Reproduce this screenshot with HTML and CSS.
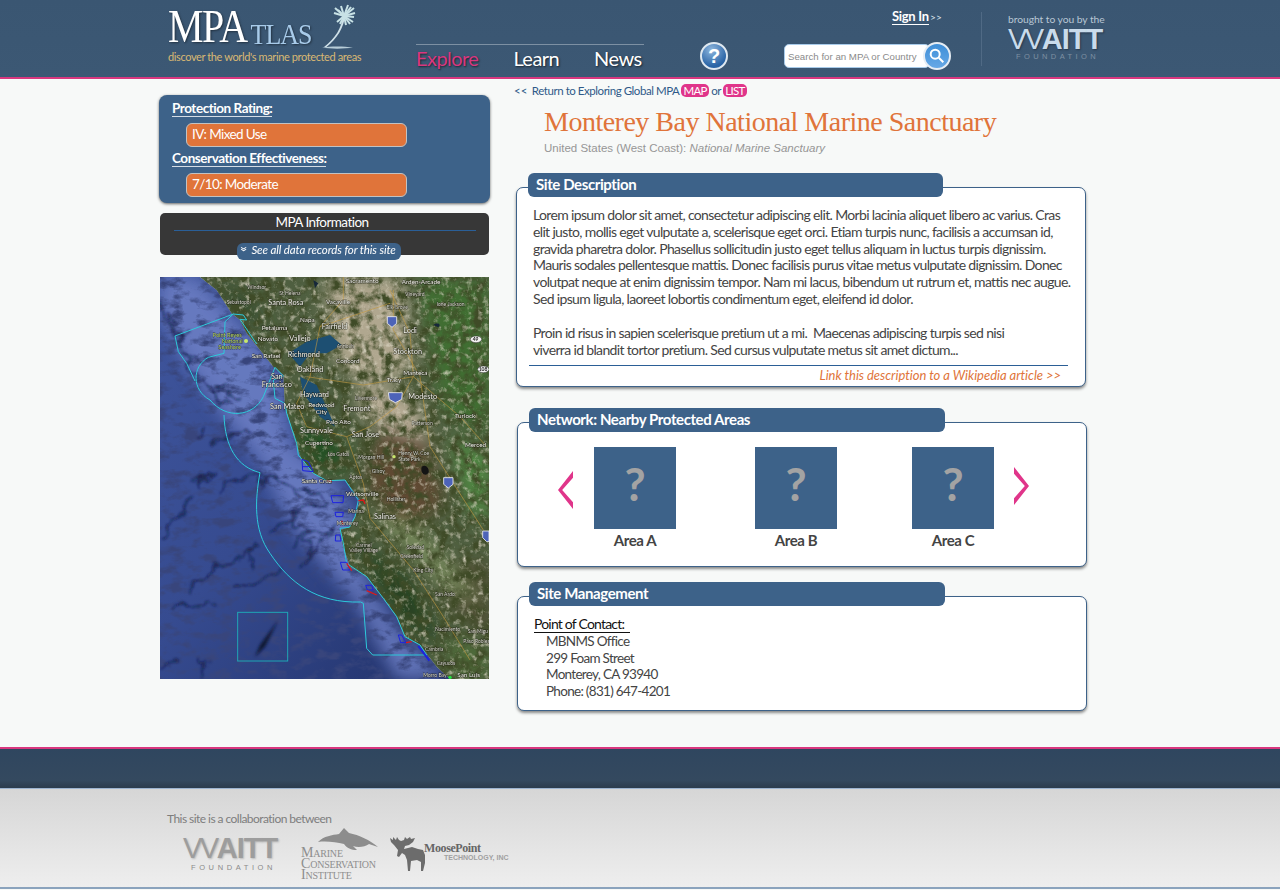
FILE: index.html
```html
<!DOCTYPE html>
<html lang="en">
<head>
<meta charset="utf-8">
<title>MPAtlas - Monterey Bay National Marine Sanctuary</title>
<link rel="stylesheet" href="styles.css">
</head>
<body>
<header class="site-header">
  <div class="logo">
    <div class="logo-word"><span class="logo-mpa">MPA</span><span class="logo-tlas">TLAS</span>
      <svg class="palm" viewBox="0 0 40 46" aria-hidden="true">
        <path class="palm-trunk" d="M23 13C22 24 15 36 4 44L6.500 44C17 36 24 24 25 13Z"/>
        <path class="palm-sand" d="M2 44.500C10 43 24 43 33 44.500C24 46 10 46 2 44.500Z"/>
        <g class="palm-fronds">
          <path d="M24 13L14 10"/><path d="M24 13L15 5"/><path d="M24 13L21 3"/><path d="M24 13L28 2"/>
          <path d="M24 13L34 5"/><path d="M24 13L35 10"/><path d="M24 13L33 19"/><path d="M24 13L26 22"/><path d="M24 13L17 19"/><path d="M24 13L31 4"/><path d="M24 13L18 7"/><path d="M24 13L34 14"/><path d="M24 13L30 21"/><path d="M24 13L20 21"/>
        </g>
      </svg>
    </div>
    <div class="tagline">discover the world's marine protected areas</div>
  </div>
  <nav class="main-nav">
    <a class="nav-item nav-active">Explore</a>
    <a class="nav-item nav-learn">Learn</a>
    <a class="nav-item nav-news">News</a>
  </nav>
  <div class="help-badge">?</div>
  <div class="account">
    <div class="signin"><a class="signin-link">Sign In</a> <span class="signin-arrows">&gt;&gt;</span></div>
    <div class="search">
      <span class="search-input">Search for an MPA or Country</span>
      <span class="search-btn">
        <svg viewBox="0 0 20 20" class="search-icon" aria-hidden="true"><circle cx="8" cy="8" r="5"/><path d="M12 12L17 17"/></svg>
      </span>
    </div>
  </div>
  <div class="brand">
    <div class="brand-by">brought to you by the</div>
    <div class="waitt"><span class="waitt-vv">VV</span>AITT</div>
    <div class="waitt-sub">FOUNDATION</div>
  </div>
</header>

<main class="page">
  <aside class="side">
    <section class="rating-card">
      <h3 class="rating-title">Protection Rating:</h3>
      <div class="rating-pill">IV: Mixed Use</div>
      <h3 class="rating-title rating-title-2">Conservation Effectiveness:</h3>
      <div class="rating-pill">7/10: Moderate</div>
    </section>
    <section class="info-card">
      <div class="info-title">MPA Information</div>
      <div class="info-rule"></div>
      <a class="info-pill"><span class="info-chev">&#187;</span> See all data records for this site</a>
    </section>
    <svg class="map" viewBox="30 21 987 1206" aria-label="Map of Monterey Bay National Marine Sanctuary">
      <defs>
        <linearGradient id="sea" x1="0" y1="0" x2="1" y2="1">
          <stop offset="0" stop-color="#3f559c"/><stop offset=".45" stop-color="#364b90"/><stop offset="1" stop-color="#1f2f66"/>
        </linearGradient>
        <filter id="wiggle" x="-10%" y="-10%" width="120%" height="120%">
          <feTurbulence type="fractalNoise" baseFrequency=".018" numOctaves="4" seed="5" result="n"/>
          <feDisplacementMap in="SourceGraphic" in2="n" scale="70" xChannelSelector="R" yChannelSelector="G"/>
          <feGaussianBlur stdDeviation="3.500"/>
        </filter>
        <filter id="b4" x="-30%" y="-30%" width="160%" height="160%"><feGaussianBlur stdDeviation="4"/></filter>
        <filter id="b30" x="-30%" y="-30%" width="160%" height="160%"><feGaussianBlur stdDeviation="26"/></filter>
        <filter id="noiseLand" x="0" y="0" width="100%" height="100%">
          <feTurbulence type="fractalNoise" baseFrequency=".03" numOctaves="5" seed="7"/>
          <feColorMatrix values="0 0 0 0 .05  0 0 0 0 .07  0 0 0 0 .02  2.200 2.200 0 0 -1.900"/>
        </filter>
        <filter id="noiseLight" x="0" y="0" width="100%" height="100%">
          <feTurbulence type="fractalNoise" baseFrequency=".06" numOctaves="4" seed="23"/>
          <feColorMatrix values="0 0 0 0 .72  0 0 0 0 .68  0 0 0 0 .56  1.400 1.400 0 0 -1.450"/>
        </filter>
        <filter id="noiseSea" x="0" y="0" width="100%" height="100%">
          <feTurbulence type="fractalNoise" baseFrequency=".02 .035" numOctaves="5" seed="11"/>
          <feColorMatrix values="0 0 0 0 .04  0 0 0 0 .06  0 0 0 0 .2  2.400 2.400 0 0 -2.300"/>
        </filter>
        <clipPath id="landClip">
          <path d="M150 21L200 60L245 130L270 150L290 190L330 240L370 290L400 315L405 410L435 510L455 570L490 610L530 632L585 630L630 690L620 730L600 770L570 780L580 830L600 890L650 920L700 985L740 1040L765 1100L810 1125L860 1190L900 1227L1017 1227L1017 21Z"/>
        </clipPath>
        <clipPath id="seaClip">
          <path d="M30 21L150 21L200 60L245 130L270 150L290 190L330 240L370 290L400 315L405 410L435 510L455 570L490 610L530 632L585 630L630 690L620 730L600 770L570 780L580 830L600 890L650 920L700 985L740 1040L765 1100L810 1125L860 1190L900 1227L30 1227Z"/>
        </clipPath>
      </defs>
      <g clip-path="url(#seaClip)">
        <rect x="30" y="21" width="987" height="1206" fill="url(#sea)"/>
        <path d="M140 21L380 290L420 520L560 640L640 800L640 920L760 1100L900 1227L740 1227L620 1000L420 760L340 590L120 300L30 120L30 21Z" fill="#6e80c6" filter="url(#b30)" opacity=".85"/>
        <rect x="30" y="21" width="987" height="1206" filter="url(#noiseSea)"/>
        <g class="canyon" filter="url(#wiggle)">
          <path d="M30 110L70 170L100 240L135 330"/>
          <path d="M60 130L90 150M70 190L110 200M100 260L140 270"/>
          <path d="M150 330L190 380L250 410M190 350L230 350M230 380L270 380"/>
          <path d="M130 495L165 480"/>
          <path d="M180 535L240 500L300 470"/>
          <path d="M140 640L175 610L155 655"/>
          <path d="M210 660L330 610L425 645L520 680M330 610L340 660M425 645L440 690"/>
          <path d="M360 790L430 730L520 690M430 730L450 770"/>
          <path d="M200 900L320 840L300 880"/>
          <path d="M420 830L540 770"/>
          <path d="M470 900L480 790"/>
          <path d="M30 1190L90 1170"/>
          <path d="M160 1170L150 1227"/>
          <path d="M30 800L120 700"/>
          <path d="M250 960L400 900"/>
          <path d="M560 760L450 900"/>
          <path d="M110 950L220 880M60 1010L180 1000"/>
        </g>
        <path class="seamount" d="M385 1050L330 1125L315 1160L345 1130Z" filter="url(#b4)"/>
      </g>
      <g clip-path="url(#landClip)">
        <rect x="30" y="21" width="987" height="1206" fill="#4f5f40"/>
        <g filter="url(#b30)">
          <path d="M530 21L760 21L790 300L700 340L570 300L530 160Z" fill="#b0a78f"/>
          <path d="M620 330L800 390L860 600L780 500L640 450Z" fill="#b7ac95"/>
          <path d="M690 470L830 510L880 700L760 800L650 640Z" fill="#5f4a30"/>
          <path d="M800 30L1017 30L1017 500L880 420Z" fill="#3f6e33"/>
          <path d="M900 500L1017 560L1017 760L960 720Z" fill="#4f8a42"/>
          <path d="M820 880L1017 880L1017 1100L900 1000Z" fill="#4f4c30"/>
          <path d="M170 21L300 80L360 200L270 130Z" fill="#33492b"/>
          <path d="M420 450L560 500L600 610L480 590Z" fill="#234f22"/>
          <path d="M600 800L780 930L880 1130L760 1060Z" fill="#23401f"/>
          <path d="M660 730L800 760L1000 1000L880 950Z" fill="#76885b"/>
          <path d="M880 1100L1017 1130L1017 1227L920 1227Z" fill="#4d6a38"/>
        </g>
        <rect x="30" y="21" width="987" height="1206" filter="url(#noiseLand)"/>
        <rect x="30" y="21" width="987" height="1206" filter="url(#noiseLight)"/>
        <path class="mtn" d="M815 590C830 580 840 600 835 610C825 620 810 610 815 590Z"/>
        <path class="bay" d="M415 250L470 215L540 195L575 225L530 250L480 250L450 290ZM450 320L500 345L555 470L510 440L460 370Z"/>
        <path class="lake" d="M850 165C865 155 875 165 865 172ZM490 30L505 40L495 55Z"/>
        <g class="road">
          <path d="M580 21L580 90L510 170L480 320L440 400L470 470L590 500L660 470L740 410L790 320L780 190L720 60"/>
          <path d="M730 60L730 180L810 320L840 530L910 640L1000 780"/>
          <path d="M470 320L640 345L790 320"/>
          <path d="M660 745L790 900L880 1040L960 1170"/>
          <path d="M590 500L640 640L660 745"/>
          <path d="M510 170L720 100"/>
          <path d="M790 320L930 440L1010 530"/>
        </g>
      </g>
      <g class="bound">
        <path d="M75 198L250 132L280 135L290 150L270 148L320 222"/>
        <path d="M75 198L85 245L110 280L135 333"/>
        <path d="M250 132L225 155L222 250L175 262C125 290 125 360 180 390C230 450 310 440 340 380L375 292L400 318L370 330L375 385L405 400L410 430L440 520L445 555L490 610L530 632L585 630L625 690L615 740L598 772L570 775L580 820L590 880L650 920L700 985L740 1040L765 1100L810 1125L830 1155L668 1155L650 1135L640 1000L632 996C500 1000 420 940 360 850C310 780 315 690 330 608C260 590 225 530 222 435"/>
        <rect x="263" y="1027" width="150" height="146"/>
      </g>
      <g class="mpa-blue">
        <path d="M456 568L475 575L490 605L458 602Z"/><path d="M456 590L480 590"/>
        <path d="M543 677L581 677L579 698L548 698Z"/>
        <path d="M555 727L580 727L578 740L558 740Z"/>
        <path d="M557 795L570 795L573 813L556 813Z"/>
        <path d="M571 877L590 877L600 900L578 900Z"/>
        <path d="M647 946L665 946L670 960L652 960Z"/>
        <path d="M745 1095L755 1095L768 1118L752 1118Z"/>
        <path class="mpa-solid" d="M805 1128L838 1172"/>
      </g>
      <g class="mpa-red">
        <path d="M625 692L640 690L645 702"/>
        <path d="M530 632L545 635"/>
        <path d="M575 752L580 765"/>
        <path d="M650 962L680 975"/>
        <path d="M768 1118L785 1115"/>
        <path d="M590 880L605 902"/>
      </g>
      <circle class="map-park" cx="288" cy="213" r="6"/>
      <circle class="map-park" cx="732" cy="560" r="5"/>
      <circle class="map-green" cx="900" cy="1222" r="5"/>
      <g class="lbl">
        <text x="587" y="40" class="sm">Sacramento</text><text x="755" y="43" class="sm">Arden-Arcade</text>
        <text x="292" y="58" class="xs">Windsor</text><text x="388" y="75" class="xs">St Helena</text>
        <text x="230" y="101" class="xs">Sebastopol</text><text x="355" y="105">Santa Rosa</text>
        <text x="528" y="103" class="sm">Vacaville</text><text x="765" y="78" class="xs">Vineyard</text>
        <text x="450" y="155" class="sm">Napa</text><text x="335" y="180" class="sm">Petaluma</text>
        <text x="515" y="178">Fairfield</text><text x="710" y="116" class="xs">Elk Grove</text>
        <text x="760" y="188">Lodi</text><text x="860" y="108" class="xs">Ione Jackson</text>
        <text x="323" y="213" class="sm">Novato</text><text x="418" y="214">Vallejo</text>
        <text x="305" y="263" class="sm">San Rafael</text><text x="413" y="260">Richmond</text>
        <text x="560" y="235" class="xs">Antioch</text><text x="558" y="280" class="sm">Concord</text>
        <text x="730" y="251">Stockton</text><text x="440" y="307">Oakland</text>
        <text x="363" y="327">San</text><text x="335" y="350">Francisco</text>
        <text x="760" y="315" class="sm">Manteca</text><text x="710" y="336" class="sm">Tracy</text>
        <text x="450" y="380">Hayward</text><text x="775" y="388">Modesto</text>
        <text x="360" y="418">San Mateo</text><text x="475" y="410" class="sm">Redwood</text>
        <text x="497" y="433" class="sm">City</text><text x="580" y="424">Fremont</text>
        <text x="615" y="391" class="xs">Livermore</text><text x="915" y="444" class="sm">Turlock</text>
        <text x="450" y="490">Sunnyvale</text><text x="605" y="502">San Jose</text>
        <text x="528" y="463" class="sm">Palo Alto</text><text x="465" y="524" class="sm">Cupertino</text>
        <text x="785" y="466" class="xs">Patterson</text><text x="945" y="532" class="sm">Merced</text>
        <text x="533" y="557" class="xs">Los Gatos</text><text x="625" y="567" class="xs">Morgan Hill</text>
        <text x="745" y="556" class="xs">Henry W. Coe</text><text x="745" y="573" class="xs">State Park</text>
        <text x="455" y="638" class="sm">Santa Cruz</text><text x="588" y="678" class="sm">Watsonville</text>
        <text x="598" y="626" class="xs">Aptos</text><text x="665" y="609" class="xs">Gilroy</text>
        <text x="710" y="693" class="xs">Hollister</text><text x="595" y="730" class="xs">Marina</text>
        <text x="672" y="748">Salinas</text><text x="560" y="765" class="xs">Monterey</text>
        <text x="618" y="830" class="xs">Carmel</text><text x="598" y="846" class="xs">Valley Village</text>
        <text x="770" y="838" class="xs">Soledad</text><text x="750" y="865" class="xs">Greenfield</text>
        <text x="790" y="905" class="xs">King City</text><text x="855" y="977" class="xs">San Ardo</text>
        <text x="855" y="1082" class="xs">Nacimiento</text><text x="953" y="1088" class="xs">San Migu</text>
        <text x="940" y="1118" class="xs">Paso Robles</text><text x="825" y="1142" class="xs">Cambria</text>
        <text x="860" y="1186" class="xs">Cayucos</text><text x="922" y="1220" class="sm">San Luis</text>
        <text x="820" y="1222" class="xs">Morro Bay</text>
      </g>
      <g class="lbl-park">
        <text x="188" y="200">Point Reyes</text><text x="215" y="218">National</text><text x="205" y="236">Seashore</text>
      </g>
      <g class="shield">
        <path d="M712 140L740 140L740 160L726 172L712 160Z"/><path d="M715 368L757 368L755 388L736 398L718 388Z"/>
        <path d="M881 623L909 623L909 643L895 654L881 643Z"/><path d="M998 783L1017 783L1017 815L1010 815L998 803Z"/>
      </g>
      <g class="hwy"><ellipse cx="978" cy="208" rx="17" ry="10"/><ellipse cx="1000" cy="298" rx="17" ry="10"/>
        <text x="968" y="214">49</text><text x="986" y="304">108</text></g>
    </svg>
  </aside>

  <div class="content">
    <p class="crumb"><span class="crumb-arrows">&lt;&lt;</span> Return to Exploring Global MPA <span class="tag">MAP</span> or <span class="tag">LIST</span></p>
    <h1 class="title">Monterey Bay National Marine Sanctuary</h1>
    <p class="subtitle">United States (West Coast): <em>National Marine Sanctuary</em></p>

    <section class="panel panel-desc">
      <h2 class="panel-tab">Site Description</h2>
      <div class="panel-box desc-box">
        <p class="desc">Lorem ipsum dolor sit amet, consectetur adipiscing elit. Morbi lacinia aliquet libero ac varius. Cras<br>elit justo, mollis eget vulputate a, scelerisque eget orci. Etiam turpis nunc, facilisis a accumsan id,<br>gravida pharetra dolor. Phasellus sollicitudin justo eget tellus aliquam in luctus turpis dignissim.<br>Mauris sodales pellentesque mattis. Donec facilisis purus vitae metus vulputate dignissim. Donec<br>volutpat neque at enim dignissim tempor. Nam mi lacus, bibendum ut rutrum et, mattis nec augue.<br>Sed ipsum ligula, laoreet lobortis condimentum eget, eleifend id dolor.</p>
        <p class="desc desc-2">Proin id risus in sapien scelerisque pretium ut a mi.&nbsp; Maecenas adipiscing turpis sed nisi<br>viverra id blandit tortor pretium. Sed cursus vulputate metus sit amet dictum...</p>
        <div class="wiki"><a class="wiki-link">Link this description to a Wikipedia article &gt;&gt;</a></div>
      </div>
    </section>

    <section class="panel panel-net">
      <h2 class="panel-tab">Network: Nearby Protected Areas</h2>
      <div class="panel-box net-box">
        <svg class="arrow arrow-left" viewBox="0 0 18 40" preserveAspectRatio="none" aria-hidden="true"><path d="M18 0V7L5 20L18 33V40L0 20Z"/></svg>
        <div class="area area-a"><div class="area-thumb">?</div><div class="area-name">Area A</div></div>
        <div class="area area-b"><div class="area-thumb">?</div><div class="area-name">Area B</div></div>
        <div class="area area-c"><div class="area-thumb">?</div><div class="area-name">Area C</div></div>
        <svg class="arrow arrow-right" viewBox="0 0 18 40" preserveAspectRatio="none" aria-hidden="true"><path d="M0 0V7L13 20L0 33V40L18 20Z"/></svg>
      </div>
    </section>

    <section class="panel panel-mgmt">
      <h2 class="panel-tab">Site Management</h2>
      <div class="panel-box mgmt-box">
        <div class="poc">Point of Contact:</div>
        <address class="addr">MBNMS Office<br>299 Foam Street<br>Monterey, CA 93940<br>Phone: (831) 647-4201</address>
      </div>
    </section>
  </div>
</main>

<footer class="site-footer">
  <div class="footer-band"></div>
  <div class="footer-body">
    <div class="collab">This site is a collaboration between</div>
    <div class="partners">
      <div class="partner-waitt">
        <div class="waitt waitt-dark"><span class="waitt-vv">VV</span>AITT</div>
        <div class="waitt-sub waitt-sub-dark">FOUNDATION</div>
      </div>
      <div class="partner-mci">
        <svg class="dolphin" viewBox="0 0 60 22" aria-hidden="true">
          <path d="M0 14C6 8 14 7 21 6L26 0L31 5C41 7 52 12 60 19L51 16C47 19 40 20 35 18L39 22C33 22 29 20 26 16C18 14 8 13 0 14Z"/>
        </svg>
        <div class="mci-text"><span>Marine</span><span>Conservation</span><span>Institute</span></div>
      </div>
      <div class="partner-moose">
        <svg class="moose" viewBox="0 0 36 34" aria-hidden="true">
          <path d="M0 1L3 3L3 0L6 3L7 0L9 3L11 4L14 3L15 0L17 2L20 0L21 2L25 1L23 5L19 8L15 9L14 12L18 11L22 10L28 12L33 13L35 18L35 26L33 34H31L31 25L27 23L21 24L20 34H18L17 23L15 18L12 16L9 20L7 19L8 13L4 8L1 5Z"/>
        </svg>
        <div class="moose-text"><div class="moose-name">MoosePoint</div><div class="moose-sub">TECHNOLOGY, INC</div></div>
      </div>
    </div>
  </div>
</footer>
</body>
</html>
```
FILE: styles.css
```css
* { box-sizing: border-box; }
html, body { margin: 0; padding: 0; }
body { background: #f7f9f8; font-family: Lato, "Open Sans", sans-serif; color: #444; height: 890px; overflow: hidden; }
h1, h2, h3, p, address { margin: 0; font-style: normal; }

/* header */
.site-header { height: 79px; border-bottom: 2px solid #d9377f; background: linear-gradient(#3a5672, #3c5874); display: flex; padding-left: 168px; position: relative; }
.logo { width: 248px; padding-top: 7px; }
.logo-word { height: 42px; display: flex; align-items: flex-end; color: #fff; font-family: "Liberation Serif", serif; line-height: 1; position: relative; text-shadow: 1px 1px 2px rgba(0,0,0,.45); }
.logo-mpa { display: inline-block; font-size: 40px; letter-spacing: -1.500px; transform: scaleY(1.140); transform-origin: 50% 88%; }
.logo-tlas { display: inline-block; font-size: 26px; color: #a8cbea; margin-left: 4px; letter-spacing: -1px; transform: scaleY(1.150); transform-origin: 50% 88%; }
.palm { width: 40px; height: 46px; position: absolute; left: 152px; top: -4px; }
.palm-trunk { fill: #cfe0e8; }
.palm-sand { fill: #b8cdd8; }
.palm-fronds path { stroke: #c8e2e6; stroke-width: 2; fill: none; }
.tagline { font-size: 11px; color: #d9b873; letter-spacing: -.38px; margin-top: 1px; white-space: nowrap; }
.main-nav { width: 228px; height: 30px; margin-top: 44px; border-top: 1px solid #7d90a3; display: flex; font-size: 20px; line-height: 26px; }
.nav-item { color: #fff; text-shadow: 1px 1px 2px rgba(0,0,0,.6); letter-spacing: -.55px; }
.nav-active { color: #d9377f; }
.nav-learn { margin-left: 35px; }
.nav-news { margin-left: 35px; }
.help-badge { width: 28px; height: 28px; margin: 42px 0 0 56px; border-radius: 50%; border: 2px solid #dfe8f0; background: radial-gradient(circle at 40% 25%, #8eb6dd, #2a64a6 70%); color: #fff; font: bold 20px/24px "Liberation Sans", sans-serif; text-align: center; }
.account { width: 170px; margin-left: 56px; position: relative; }
.signin { margin-top: 8px; height: 20px; padding-left: 108px; font-size: 13px; line-height: 16px; color: #fff; white-space: nowrap; }
.signin-link { border-bottom: 1px solid #fff; font-weight: 700; letter-spacing: -.3px; }
.signin-arrows { font-size: 10px; color: #dfe6ee; margin-left: -2px; }
.search { margin-top: 16px; width: 167px; height: 24px; position: relative; }
.search-input { display: block; width: 146px; height: 24px; background: #fff; border: 1px solid #a8cbea; border-radius: 5px; color: #8a8a8a; font: 9.700px/24px "Liberation Sans", sans-serif; padding-left: 3px; white-space: nowrap; overflow: hidden; }
.search-btn { position: absolute; right: 0; top: -2px; width: 28px; height: 28px; border-radius: 50%; border: 2px solid #e6edf4; background: linear-gradient(#3f8fd8, #66a8e6); display: flex; align-items: center; justify-content: center; }
.search-icon { width: 18px; height: 18px; fill: none; stroke: #fff; stroke-width: 2.200; }
.brand { margin-left: 27px; margin-top: 12px; padding-left: 26px; height: 54px; border-left: 1px solid #506a85; width: 130px; }
.brand-by { font-size: 10.300px; color: #b8c6d4; white-space: nowrap; line-height: 14px; letter-spacing: -.05px; }
.waitt { font: bold 29px/26px "Liberation Sans", sans-serif; color: #c9dbeb; letter-spacing: -1px; text-shadow: 1px 1px 2px rgba(0,0,0,.35); white-space: nowrap; }
.waitt-vv { font-weight: 400; letter-spacing: -2.500px; }
.waitt-sub { font: 7.500px/9px "Liberation Sans", sans-serif; color: #7e90a2; letter-spacing: 3.400px; padding-left: 8px; white-space: nowrap; }

/* layout */
.page { display: flex; padding-left: 159px; }
.side { width: 331px; padding-top: 16px; }
.content { width: 572px; margin-left: 26px; }

/* rating card */
.rating-card { height: 108px; background: #3d6289; border-radius: 8px; box-shadow: 0 1px 3px rgba(0,0,0,.6); padding: 6px 13px; }
.rating-title { width: fit-content; color: #fff; font-size: 13.500px; line-height: 15px; font-weight: 700; border-bottom: 1px solid #d5dde6; letter-spacing: -.45px; }
.rating-title-2 { margin-top: 4px; }
.rating-pill { width: 221px; height: 24px; margin: 6px 0 0 14px; background: #e0743a; border: 1px solid #c2c2c2; border-radius: 6px; color: #fff; font-size: 13.500px; line-height: 21px; padding-left: 5px; letter-spacing: -.6px; }
.info-card { width: 329px; height: 42px; margin: 10px 0 0 1px; background: #373737; border-radius: 5px; position: relative; text-align: center; padding-top: 2px; }
.info-title { color: #fff; font-size: 13.500px; line-height: 15px; letter-spacing: -.55px; margin-left: -5px; }
.info-rule { width: 302px; height: 1px; background: #2a5f98; margin: 0 auto; }
.info-pill { position: absolute; left: 77px; top: 30px; width: 164px; height: 17px; background: #3d6289; border-radius: 6px; color: #fff; font-size: 11.500px; font-style: italic; line-height: 14px; white-space: nowrap; letter-spacing: -.1px; }
.info-chev { display: inline-block; transform: rotate(90deg); font-style: normal; font-size: 13px; line-height: 12px; margin-right: 1px; }
.map { display: block; width: 329px; height: 402px; margin: 22px 0 0 1px; }
.canyon path { stroke: #10193f; stroke-width: 7; fill: none; opacity: .65; }
.seamount { fill: #0d1532; }
.mtn { fill: #141414; }
.bay { fill: #1d4f72; }
.lake { fill: #16283a; }
.road path { fill: none; stroke: #c29a42; stroke-width: 2.200; opacity: .85; }
.bound path, .bound rect { fill: none; stroke: #2dcadb; stroke-width: 3; }
.bound rect { stroke: #1fa6b5; }
.mpa-blue path { fill: none; stroke: #1c22e0; stroke-width: 3; }
.mpa-blue .mpa-solid { stroke-width: 6; }
.mpa-red path { fill: none; stroke: #e01818; stroke-width: 4; }
.map-park { fill: #c8e86c; }
.map-green { fill: #22e040; }
.lbl text { font: 22px Lato, sans-serif; fill: #f2f2ea; paint-order: stroke; stroke: rgba(30,30,20,.75); stroke-width: 3px; }
.lbl .sm { font-size: 19px; }
.lbl .xs { font-size: 15px; fill: #dcdcd2; stroke-width: 2.500px; }
.lbl-park text { font: 17px Lato, sans-serif; fill: #b6d86a; paint-order: stroke; stroke: rgba(30,30,20,.7); stroke-width: 2.500px; }
.shield path { fill: #4d63b8; stroke: #eee; stroke-width: 2.500; }
.hwy ellipse { fill: #f4f4f4; stroke: #222; stroke-width: 1.500; }
.hwy text { font: bold 15px Lato, sans-serif; fill: #222; }

/* content */
.crumb { margin: 4px 0 0 -2px; height: 16px; color: #2f5a88; font-size: 11.500px; line-height: 16px; white-space: nowrap; letter-spacing: -.45px; }
.crumb-arrows { margin-right: 2px; letter-spacing: 0; }
.tag { display: inline-block; height: 13px; padding: 0 2px; background: #e0358a; color: #fff; border-radius: 5px; line-height: 13px; letter-spacing: -.7px; }
.title { margin: 6px 0 0 28px; color: #e0743a; font: 400 28px/34px "Liberation Serif", serif; white-space: nowrap; letter-spacing: -.5px; }
.subtitle { margin: 1px 0 0 28px; color: #969696; font: 11.500px/16px "Liberation Sans", sans-serif; white-space: nowrap; }
.panel { position: relative; }
.panel-desc { margin-top: 17px; }
.panel-net { margin-top: 21px; }
.panel-mgmt { margin-top: 15px; }
.panel-tab { width: 415px; height: 24px; margin-left: 12px; background: #3d6289; border-radius: 6px; color: #fff; font-size: 15px; font-weight: 700; line-height: 23px; padding-left: 8px; letter-spacing: -.4px; position: relative; }
.panel-box { width: 570px; margin-top: -10px; background: #fff; border: 1px solid #3d6289; border-radius: 7px; box-shadow: 0 2px 3px rgba(0,0,0,.45); }
.desc-box { height: 200px; padding: 19px 12px 0 16px; }
.desc { font-size: 14px; line-height: 16.800px; color: #444; white-space: nowrap; letter-spacing: -.65px; }
.desc-2 { margin-top: 17px; }
.wiki { margin: 7px 5px 0 -4px; border-top: 1px solid #2b5f96; text-align: right; padding-right: 7px; font-size: 13px; font-style: italic; line-height: 19px; color: #e0743a; letter-spacing: -.04px; }
.net-box { height: 145px; display: flex; padding-top: 24px; margin-left: 1px; }
.panel-net .panel-tab { margin-left: 13px; width: 416px; }
.panel-mgmt .panel-tab { margin-left: 13px; width: 416px; }
.arrow { width: 15px; height: 38px; fill: #e0358a; flex: none; }
.arrow-left { margin: 24px 0 0 40px; }
.arrow-right { margin: 20px 0 0 20px; }
.area { width: 82px; flex: none; text-align: center; }
.area-a { margin-left: 21px; }
.area-b { margin-left: 79px; }
.area-c { margin-left: 75px; }
.area-thumb { height: 82px; background: #3d6289; color: #a3a3a3; font-size: 46px; font-weight: 700; line-height: 74px; }
.area-name { margin-top: 2px; font-size: 15px; font-weight: 700; line-height: 18px; color: #444; letter-spacing: -.4px; }
.mgmt-box { height: 115px; margin-left: 1px; padding: 18px 16px 0 16px; }
.poc { width: fit-content; padding-right: 6px; font-size: 14px; line-height: 17px; color: #111; border-bottom: 1px solid #111; letter-spacing: -.8px; }
.addr { padding-left: 12px; font-size: 13.500px; line-height: 16.600px; color: #444; letter-spacing: -.7px; }

/* footer */
.site-footer { position: absolute; left: 0; right: 0; top: 747px; }
.footer-band { height: 42px; border-top: 2px solid #d9377f; background: linear-gradient(#2f465f, #34495f 80%, #2c3c4d); border-bottom: 1px solid #9db4d0; }
.footer-body { height: 100px; background: linear-gradient(#d6d6d6, #eeeeee); border-bottom: 2px solid #8ba3bd; padding: 22px 0 0 167px; }
.collab { font-size: 12px; line-height: 15px; color: #7d7d7d; letter-spacing: -.55px; }
.partners { display: flex; margin-top: 2px; }
.partner-waitt { margin-left: 16px; padding-top: 7px; width: 118px; }
.waitt-dark { color: #9d9d9d; text-shadow: 1px 1px 2px rgba(0,0,0,.2); }
.waitt-sub-dark { color: #8a8a8a; margin-top: 2px; letter-spacing: 3.600px; }
.partner-mci { width: 89px; }
.dolphin { display: block; width: 60px; height: 22px; margin-left: 17px; fill: #8d8d8d; }
.mci-text { margin-top: -3px; font: 14px/11px "Liberation Serif", serif; font-variant: small-caps; color: #8e8e8e; letter-spacing: -.2px; }
.mci-text span { display: block; }
.partner-moose { display: flex; padding-top: 9px; width: 125px; }
.moose { width: 36px; height: 34px; fill: #6c6c6c; flex: none; }
.moose-text { margin-left: -2px; padding-top: 6px; }
.moose-name { font: bold 12px/11px "Liberation Serif", serif; color: #666; letter-spacing: -.4px; white-space: nowrap; }
.moose-sub { font: bold 7px/7px "Liberation Sans", sans-serif; color: #a0a0a0; white-space: nowrap; margin-left: 20px; }
```
